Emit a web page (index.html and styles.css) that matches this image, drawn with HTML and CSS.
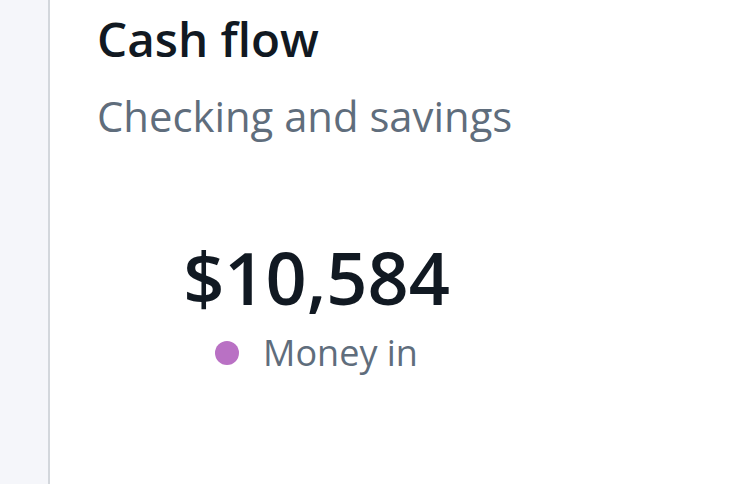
FILE: index.html
```html
<!DOCTYPE html>
<html>
<head>
<meta charset="utf-8">
<link rel="stylesheet" href="styles.css">
</head>
<body>
<div class="layout">
  <aside class="sidebar"></aside>
  <main class="card">
    <h1 class="title">Cash flow</h1>
    <p class="subtitle">Checking and savings</p>
    <div class="summary">
      <div class="amount">$10,584</div>
      <div class="legend"><span class="dot"></span><span class="legend-label">Money in</span></div>
    </div>
  </main>
</div>
</body>
</html>
```
FILE: styles.css
```css
html, body {
  margin: 0;
  padding: 0;
  background: #ffffff;
  font-family: "Open Sans", "Noto Sans", sans-serif;
}
.layout {
  display: flex;
  height: 484px;
  overflow: hidden;
}
.sidebar {
  width: 48px;
  flex: 0 0 48px;
  background: #f5f6fa;
  border-right: 2px solid #d3d7dc;
}
.card {
  flex: 1;
  padding: 7px 0 0 47px;
  background: #ffffff;
}
.title {
  margin: 0;
  font-size: 47.6px;
  line-height: 64px;
  font-weight: 600;
  color: #111922;
}
.subtitle {
  margin: 17px 0 0;
  font-size: 41.8px;
  line-height: 56px;
  font-weight: 400;
  color: #5f6d7c;
}
.summary {
  margin-top: 93px;
  width: 439px;
  display: flex;
  flex-direction: column;
  align-items: center;
}
.amount {
  font-size: 72px;
  line-height: 80px;
  font-weight: 600;
  color: #111922;
}
.legend {
  margin-top: 12px;
  display: flex;
  align-items: center;
  gap: 24px;
  line-height: 48px;
}
.dot {
  width: 24px;
  height: 24px;
  border-radius: 50%;
  background: #b971c4;
}
.legend-label {
  font-size: 36px;
  color: #5f6d7c;
}
```
